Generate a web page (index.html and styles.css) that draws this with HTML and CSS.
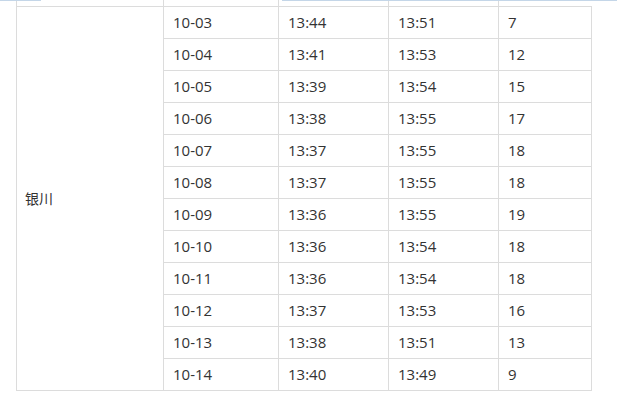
FILE: index.html
```html
<!DOCTYPE html>
<html lang="zh">
<head>
<meta charset="utf-8">
<link rel="stylesheet" href="styles.css">
</head>
<body>
<div class="page">
  <div class="overlay">
    <span class="seg seg-a"></span>
    <span class="seg seg-b"></span>
  </div>
  <table class="tbl">
    <colgroup>
      <col class="c1"><col class="c2"><col class="c3"><col class="c4"><col class="c5">
    </colgroup>
    <tr class="stub"><td></td><td></td><td></td><td></td><td class="noright"></td></tr>
    <tr><td class="city" rowspan="12">银川</td><td>10-03</td><td>13:44</td><td>13:51</td><td>7</td></tr>
    <tr><td>10-04</td><td>13:41</td><td>13:53</td><td>12</td></tr>
    <tr><td>10-05</td><td>13:39</td><td>13:54</td><td>15</td></tr>
    <tr><td>10-06</td><td>13:38</td><td>13:55</td><td>17</td></tr>
    <tr><td>10-07</td><td>13:37</td><td>13:55</td><td>18</td></tr>
    <tr><td>10-08</td><td>13:37</td><td>13:55</td><td>18</td></tr>
    <tr><td>10-09</td><td>13:36</td><td>13:55</td><td>19</td></tr>
    <tr><td>10-10</td><td>13:36</td><td>13:54</td><td>18</td></tr>
    <tr><td>10-11</td><td>13:36</td><td>13:54</td><td>18</td></tr>
    <tr><td>10-12</td><td>13:37</td><td>13:53</td><td>16</td></tr>
    <tr><td>10-13</td><td>13:38</td><td>13:51</td><td>13</td></tr>
    <tr><td>10-14</td><td>13:40</td><td>13:49</td><td>9</td></tr>
  </table>
</div>
</body>
</html>
```

FILE: styles.css
```css
html, body {
  margin: 0;
  padding: 0;
  background: #fff;
}
.page {
  position: relative;
  width: 617px;
  height: 397px;
  overflow: hidden;
}
.overlay {
  position: absolute;
  top: 0;
  left: 0;
  width: 617px;
  height: 2px;
}
.seg {
  position: absolute;
  top: 0;
  height: 1px;
  background: #c4d6e8;
}
.seg-a { left: 0; width: 41px; }
.seg-b { left: 282px; width: 335px; }
.tbl {
  margin-left: 16px;
  border-collapse: collapse;
  table-layout: fixed;
  width: 575px;
  font-family: "Open Sans", "Noto Sans CJK SC", sans-serif;
  font-size: 15px;
  color: #333;
}
.c1 { width: 147px; }
.c2 { width: 115px; }
.c3 { width: 110px; }
.c4 { width: 110px; }
.c5 { width: 93px; }
.tbl td {
  border: 1px solid #dcdcdc;
  padding: 0 0 0 9px;
  box-sizing: border-box;
  height: 32px;
  vertical-align: middle;
  white-space: nowrap;
}
.tbl .stub td {
  height: 6px;
  padding: 0;
  border-top: none;
}
.tbl .stub td.noright { border-right-color: transparent; }
.tbl td.city {
  padding-left: 8px;
  font-family: "Noto Sans CJK SC", sans-serif;
  font-size: 14px;
}
```
